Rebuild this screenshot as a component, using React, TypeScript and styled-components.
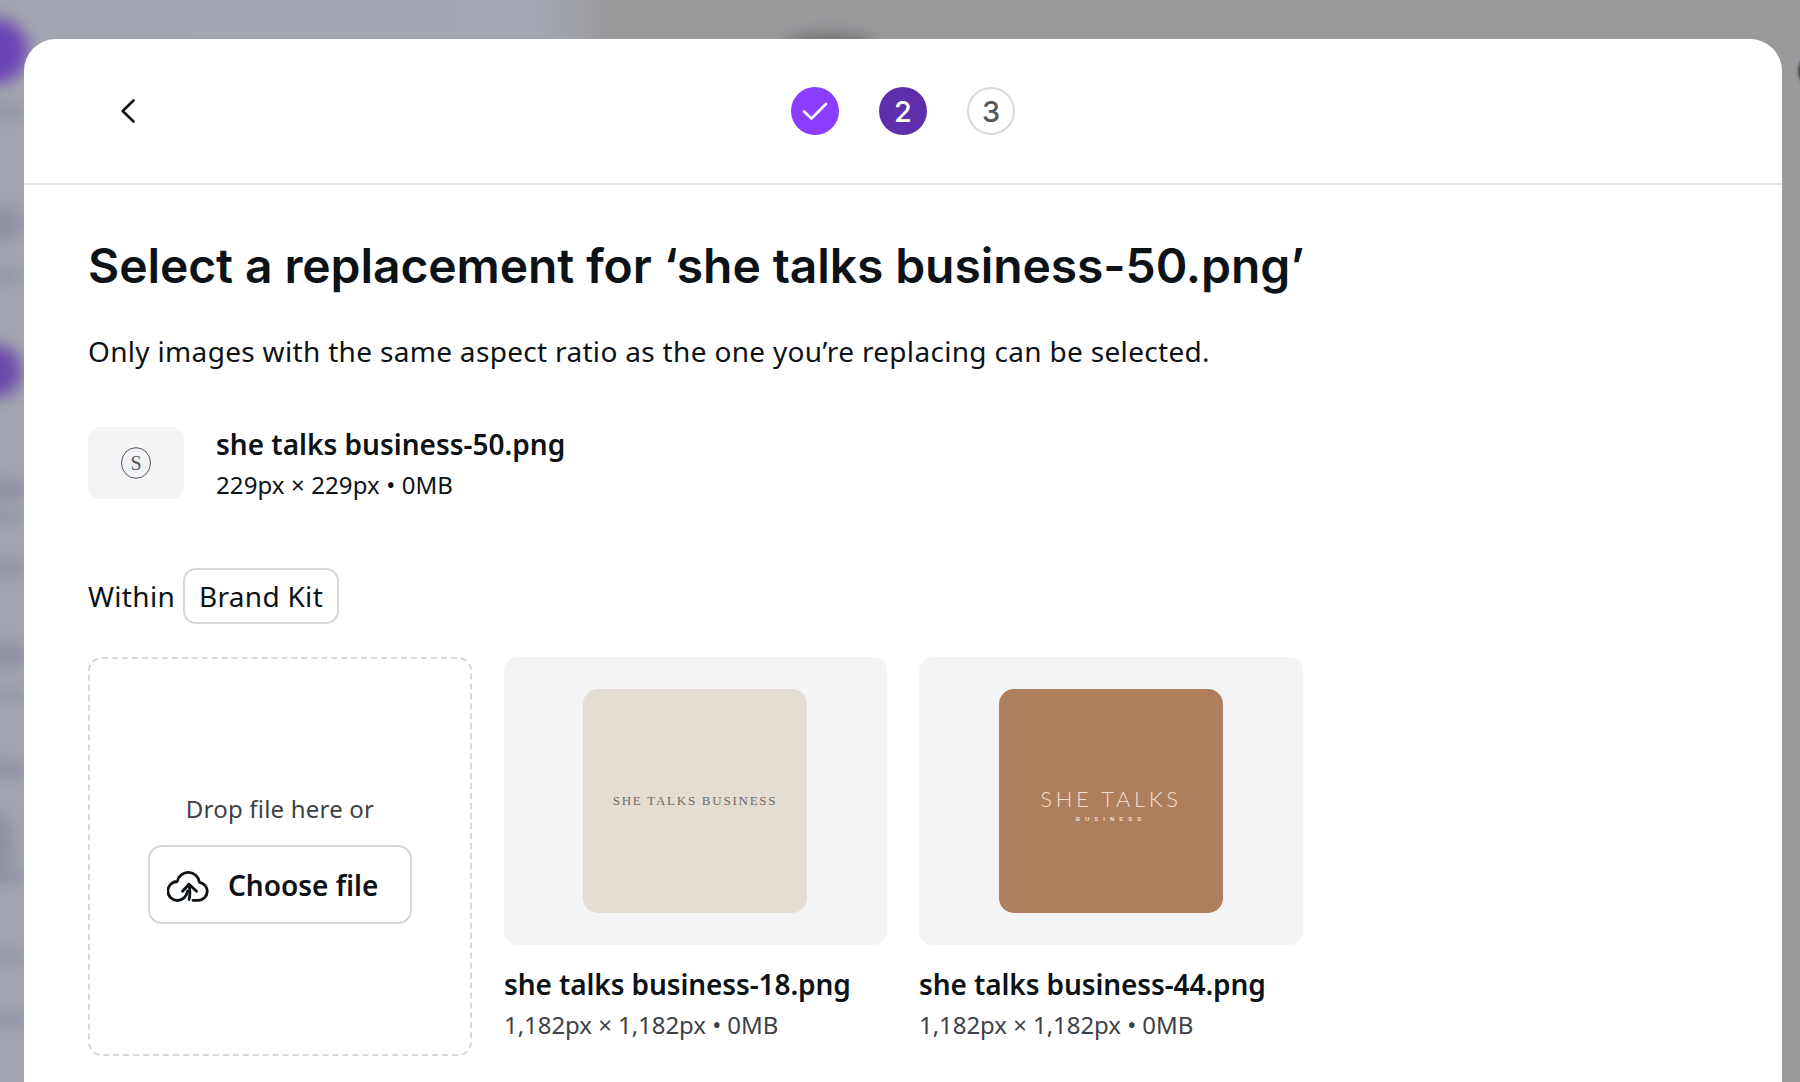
import React from "react";
import styled, { createGlobalStyle } from "styled-components";

const Global = createGlobalStyle`
  html, body { margin: 0; padding: 0; height: 100%; }
  body { overflow: hidden; background: #999a9c; font-family: "Noto Sans", "Liberation Sans", sans-serif; color: #0d1216; }
  * { box-sizing: border-box; }
`;

const Page = styled.div`
  position: relative;
  width: 1800px;
  height: 1082px;
  overflow: hidden;
  background: #999a9c;
  padding: 39px 18px 0 24px;
`;
const Sidebar = styled.div`
  position: absolute;
  inset: -10px auto -10px -10px;
  width: 606px;
  background: linear-gradient(90deg, #a3a6b1 0, #a5a8b2 90%, #9c9da2 100%);
  filter: blur(4px);
`;
const Blob = styled.div<{ $x: number; $y: number; $w: number; $h: number; $c: string; $b: number }>`
  position: absolute;
  left: ${(p) => p.$x}px;
  top: ${(p) => p.$y}px;
  width: ${(p) => p.$w}px;
  height: ${(p) => p.$h}px;
  border-radius: 50%;
  background: ${(p) => p.$c};
  filter: blur(${(p) => p.$b}px);
`;

const Modal = styled.div`
  position: relative;
  height: 1100px;
  background: #fff;
  border-radius: 32px 32px 0 0;
  overflow: hidden;
`;
const Header = styled.header`
  position: relative;
  height: 146px;
  border-bottom: 2px solid #e4e3ea;
  display: flex;
  align-items: center;
  justify-content: center;
`;
const Back = styled.button`
  position: absolute;
  left: 90px;
  top: 54px;
  width: 28px;
  height: 36px;
  padding: 0;
  border: 0;
  background: none;
  display: flex;
  align-items: center;
  justify-content: center;
  color: #0d1216;
`;
const Steps = styled.div`
  display: flex;
  gap: 40px;
`;
const Step = styled.div<{ $kind: "done" | "current" | "next" }>`
  width: 48px;
  height: 48px;
  border-radius: 50%;
  display: flex;
  align-items: center;
  justify-content: center;
  font-family: "Inter", sans-serif;
  font-size: 29px;
  font-weight: 500;
  background: ${(p) => (p.$kind === "done" ? "#8b3dff" : p.$kind === "current" ? "#5f2eaa" : "#fff")};
  color: ${(p) => (p.$kind === "next" ? "#55585c" : "#fff")};
  border: ${(p) => (p.$kind === "next" ? "2px solid #d8d8de" : "0")};
`;
const Body = styled.main`
  padding: 51px 64px 0;
`;
const Title = styled.h1`
  margin: 0;
  font-family: "Inter", sans-serif;
  font-size: 48px;
  line-height: 60px;
  font-weight: 600;
  letter-spacing: -0.09px;
  color: #0d1216;
  white-space: nowrap;
`;
const Sub = styled.p`
  margin: 39px 0 0;
  font-size: 28px;
  line-height: 32px;
  letter-spacing: 0.32px;
`;
const Current = styled.section`
  margin-top: 60px;
  display: flex;
  align-items: flex-start;
  gap: 32px;
`;
const Thumb = styled.div`
  width: 96px;
  height: 72px;
  border-radius: 12px;
  background: #f3f4f6;
  display: flex;
  align-items: center;
  justify-content: center;
`;
const Info = styled.div`
  display: flex;
  flex-direction: column;
`;
const Name = styled.div`
  font-size: 28px;
  line-height: 34px;
  font-weight: 600;
  color: #0d1216;
  white-space: nowrap;
`;
const Meta = styled.div<{ $muted?: boolean }>`
  margin-top: 8px;
  font-size: 24px;
  line-height: 32px;
  letter-spacing: ${(p) => (p.$muted ? "-0.05px" : "0.1px")};
  color: ${(p) => (p.$muted ? "#3e4146" : "#0d1216")};
  white-space: nowrap;
`;
const Filter = styled.div`
  margin-top: 67px;
  display: flex;
  align-items: center;
  gap: 8px;
  font-size: 28px;
  letter-spacing: 0.3px;
`;
const Pill = styled.div`
  height: 56px;
  width: 156px;
  border: 2px solid #d5d5dc;
  border-radius: 13px;
  display: flex;
  align-items: center;
  justify-content: center;
`;
const Grid = styled.div`
  margin-top: 33px;
  display: grid;
  grid-template-columns: 384px 383px 384px;
  gap: 32px;
`;
const Drop = styled.div`
  height: 399px;
  border: 2px dashed #d8d8de;
  border-radius: 14px;
  display: flex;
  flex-direction: column;
  align-items: center;
  padding-top: 134px;
`;
const DropText = styled.div`
  font-size: 24px;
  line-height: 32px;
  letter-spacing: 0.2px;
  color: #3e4146;
`;
const Choose = styled.button`
  margin-top: 20px;
  width: 264px;
  height: 79px;
  border: 2px solid #d5d5dc;
  border-radius: 14px;
  background: #fff;
  display: flex;
  align-items: center;
  gap: 19px;
  padding: 0 0 0 17px;
  font: 600 28px "Noto Sans", sans-serif;
  color: #0d1216;
`;
const Card = styled.article`
  display: flex;
  flex-direction: column;
`;
const CardImage = styled.div`
  height: 288px;
  border-radius: 14px;
  background: #f3f4f6;
  display: flex;
  align-items: center;
  justify-content: center;
`;
const Square = styled.div<{ $bg: string; $fg: string; $inset?: number }>`
  width: 224px;
  height: 224px;
  margin-right: ${(p) => p.$inset ?? 0}px;
  padding-bottom: 2px;
  border-radius: 15px;
  background: ${(p) => p.$bg};
  color: ${(p) => p.$fg};
  display: flex;
  flex-direction: column;
  align-items: center;
  justify-content: center;
  font-family: "Liberation Serif", serif;
`;
const Logo = styled.div<{ $size: number; $spacing: number; $gap?: number }>`
  font-size: ${(p) => p.$size}px;
  letter-spacing: ${(p) => p.$spacing}px;
  margin-top: ${(p) => p.$gap ?? 0}px;
  line-height: 1;
  white-space: nowrap;
`;
const LogoThin = styled(Logo)`
  font-family: "Lato", sans-serif;
  font-weight: 300;
`;
const LogoSmall = styled(Logo)`
  font-family: "Liberation Sans", sans-serif;
  font-weight: 700;
`;
const CardName = styled(Name)`
  margin-top: 22px;
  letter-spacing: -0.1px;
`;

const Chevron = () => (
  <svg width="14" height="24" viewBox="0 0 14 24" fill="none" stroke="currentColor" strokeWidth="2.6" strokeLinecap="round" strokeLinejoin="round">
    <path d="M12.5 1.5 1.7 12l10.8 10.5" />
  </svg>
);
const Check = () => (
  <svg width="26" height="18" viewBox="0 0 26 18" fill="none" stroke="#fff" strokeWidth="2.6" strokeLinecap="round" strokeLinejoin="round">
    <path d="M2 9.5 9.5 16.5 24 2" />
  </svg>
);
const CloudUp = () => (
  <svg width="42" height="34" viewBox="0 0 42 34" fill="none" stroke="#0d1216" strokeWidth="2.8" strokeLinecap="round" strokeLinejoin="round">
    <path d="M26 32.3H31.5A9 9 0 0 0 32.5 14.4 11.3 11.3 0 0 0 10.2 13.5 9.5 9.5 0 0 0 10.5 32.5 10.5 10.5 0 0 0 20.5 23" />
    <path d="M22 31.5C23.5 27 23 22 22 16.5" />
    <path d="M15.5 23.2 22 16.2 29.5 23.2" />
  </svg>
);
const SMark = () => (
  <svg width="32" height="34" viewBox="0 0 32 34" fill="none">
    <ellipse cx="16" cy="17" rx="14.5" ry="15.3" stroke="#55585c" strokeWidth="1" />
    <text x="16" y="24" textAnchor="middle" fontFamily="Liberation Serif, serif" fontSize="20" fill="#55585c">S</text>
  </svg>
);

const streaks = [
  [-20, 105, 50, 14], [-20, 205, 45, 36], [-20, 270, 45, 12], [-20, 478, 50, 24], [-25, 510, 50, 14],
  [-20, 560, 50, 16], [-20, 640, 50, 30], [-20, 690, 50, 10], [-20, 760, 50, 20], [-25, 810, 40, 70],
  [-20, 868, 50, 16], [-20, 950, 50, 12], [-20, 1012, 50, 14],
];

export default function App() {
  return (
    <Page>
      <Global />
      <Sidebar />
      <Blob $x={-38} $y={18} $w={66} $h={66} $c="#6b43b5" $b={8} />
      <Blob $x={-28} $y={345} $w={50} $h={52} $c="#6b49ab" $b={8} />
      {streaks.map(([x, y, w, h]) => (
        <Blob key={y} $x={x} $y={y} $w={w} $h={h} $c="#9091a3" $b={7} />
      ))}
      <Blob $x={785} $y={32} $w={90} $h={24} $c="#77777a" $b={7} />
      <Blob $x={1798} $y={58} $w={16} $h={26} $c="#48484a" $b={1} />
      <Modal>
        <Header>
          <Back aria-label="Back"><Chevron /></Back>
          <Steps>
            <Step $kind="done"><Check /></Step>
            <Step $kind="current">2</Step>
            <Step $kind="next">3</Step>
          </Steps>
        </Header>
        <Body>
          <Title>Select a replacement for ‘she talks business-50.png’</Title>
          <Sub>Only images with the same aspect ratio as the one you’re replacing can be selected.</Sub>
          <Current>
            <Thumb><SMark /></Thumb>
            <Info>
              <Name>she talks business-50.png</Name>
              <Meta>229px × 229px • 0MB</Meta>
            </Info>
          </Current>
          <Filter>
            Within
            <Pill>Brand Kit</Pill>
          </Filter>
          <Grid>
            <Drop>
              <DropText>Drop file here or</DropText>
              <Choose><CloudUp />Choose file</Choose>
            </Drop>
            <Card>
              <CardImage>
                <Square $bg="#e4ddd3" $fg="#6f6a66" $inset={1}>
                  <Logo $size={13} $spacing={1.75}>SHE TALKS BUSINESS</Logo>
                </Square>
              </CardImage>
              <CardName>she talks business-18.png</CardName>
              <Meta $muted>1,182px × 1,182px • 0MB</Meta>
            </Card>
            <Card>
              <CardImage>
                <Square $bg="#ae7e5d" $fg="#efdfd2">
                  <LogoThin $size={22} $spacing={3.6} $gap={10}>SHE TALKS</LogoThin>
                  <LogoSmall $size={6} $spacing={5} $gap={6}>BUSINESS</LogoSmall>
                </Square>
              </CardImage>
              <CardName>she talks business-44.png</CardName>
              <Meta $muted>1,182px × 1,182px • 0MB</Meta>
            </Card>
          </Grid>
        </Body>
      </Modal>
    </Page>
  );
}
